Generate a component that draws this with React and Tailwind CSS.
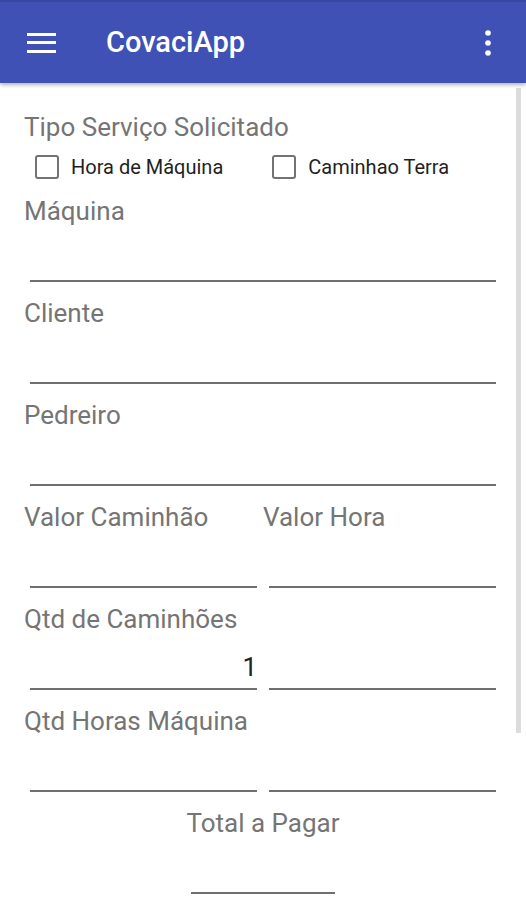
import React from "react";

const font = { fontFamily: "Roboto, 'Noto Sans', sans-serif" };

function Field({ label, value, className = "" }) {
  return (
    <div className={className}>
      <div className="h-[30px] leading-[30px] text-[26px] text-[#757575] whitespace-nowrap">{label}</div>
      <div className="mx-[6px] h-[56px] border-b-2 border-[#6f6f6f] flex items-end justify-end pb-[8px] text-[26px] leading-none text-[#212121]">
        {value}
      </div>
    </div>
  );
}

function Check({ label }) {
  return (
    <div className="flex items-center">
      <div className="w-[24px] h-[24px] border-2 border-[#737373] rounded-[3px]" />
      <span className="ml-[12px] text-[20px] text-[#1f1f1f]">{label}</span>
    </div>
  );
}

export default function App() {
  return (
    <div className="relative w-[526px] h-[900px] bg-white overflow-hidden" style={font}>
      <div className="relative z-10 h-[83px] bg-[#3f51b5] border-t-2 border-[#3847a3] flex items-center shadow-[0_2px_4px_rgba(0,0,0,0.3)]">
        <svg width="30" height="22" viewBox="0 0 30 22" className="ml-[27px]">
          <rect x="0" y="1" width="29" height="3" fill="white" />
          <rect x="0" y="9" width="29" height="3" fill="white" />
          <rect x="0" y="18" width="29" height="3" fill="white" />
        </svg>
        <span className="ml-[49px] text-[29px] font-medium text-white">CovaciApp</span>
        <svg width="8" height="26" viewBox="0 0 8 26" className="ml-auto mr-[34px]">
          <circle cx="4" cy="3" r="2.8" fill="white" />
          <circle cx="4" cy="13" r="2.8" fill="white" />
          <circle cx="4" cy="23" r="2.8" fill="white" />
        </svg>
      </div>

      <div className="absolute right-[5px] top-[88px] w-[5px] h-[645px] bg-[#dcdcdc]" />

      <div className="pl-[24px] pr-[24px] pt-[29px]">
        <div className="h-[30px] leading-[30px] text-[26px] text-[#757575]">Tipo Serviço Solicitado</div>
        <div className="mt-[10px] h-[30px] flex items-center pl-[11px]">
          <Check label="Hora de Máquina" />
          <div className="ml-[49px]">
            <Check label="Caminhao Terra" />
          </div>
        </div>
        <Field label="Máquina" className="mt-[14px]" />
        <Field label="Cliente" className="mt-[16px]" />
        <Field label="Pedreiro" className="mt-[16px]" />
        <div className="grid grid-cols-2 mt-[16px]">
          <Field label="Valor Caminhão" />
          <Field label="Valor Hora" />
        </div>
        <div className="grid grid-cols-2 mt-[16px]">
          <Field label="Qtd de Caminhões" value="1" />
          <Field label="" />
        </div>
        <div className="grid grid-cols-2 mt-[16px]">
          <Field label="Qtd Horas Máquina" />
          <Field label="" />
        </div>
        <div className="mt-[16px] flex flex-col items-center">
          <div className="h-[30px] leading-[30px] text-[26px] text-[#757575]">Total a Pagar</div>
          <div className="w-[144px] h-[56px] border-b-2 border-[#6f6f6f]" />
        </div>
      </div>
    </div>
  );
}
